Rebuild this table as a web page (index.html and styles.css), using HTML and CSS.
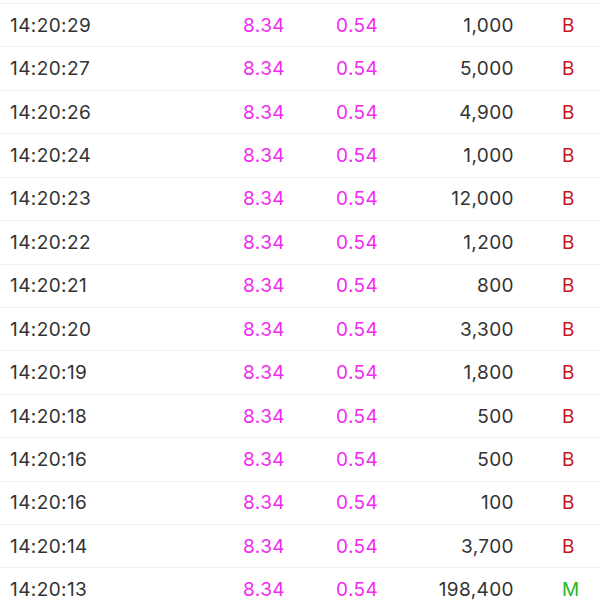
FILE: index.html
```html
<!DOCTYPE html>
<html>
<head>
<meta charset="utf-8">
<link rel="stylesheet" href="styles.css">
</head>
<body>
<div class="list">
  <div class="row"><span class="time">14:20:29</span><span class="price">8.34</span><span class="chg">0.54</span><span class="vol">1,000</span><span class="flag b">B</span></div>
  <div class="row"><span class="time">14:20:27</span><span class="price">8.34</span><span class="chg">0.54</span><span class="vol">5,000</span><span class="flag b">B</span></div>
  <div class="row"><span class="time">14:20:26</span><span class="price">8.34</span><span class="chg">0.54</span><span class="vol">4,900</span><span class="flag b">B</span></div>
  <div class="row"><span class="time">14:20:24</span><span class="price">8.34</span><span class="chg">0.54</span><span class="vol">1,000</span><span class="flag b">B</span></div>
  <div class="row"><span class="time">14:20:23</span><span class="price">8.34</span><span class="chg">0.54</span><span class="vol">12,000</span><span class="flag b">B</span></div>
  <div class="row"><span class="time">14:20:22</span><span class="price">8.34</span><span class="chg">0.54</span><span class="vol">1,200</span><span class="flag b">B</span></div>
  <div class="row"><span class="time">14:20:21</span><span class="price">8.34</span><span class="chg">0.54</span><span class="vol">800</span><span class="flag b">B</span></div>
  <div class="row"><span class="time">14:20:20</span><span class="price">8.34</span><span class="chg">0.54</span><span class="vol">3,300</span><span class="flag b">B</span></div>
  <div class="row"><span class="time">14:20:19</span><span class="price">8.34</span><span class="chg">0.54</span><span class="vol">1,800</span><span class="flag b">B</span></div>
  <div class="row"><span class="time">14:20:18</span><span class="price">8.34</span><span class="chg">0.54</span><span class="vol">500</span><span class="flag b">B</span></div>
  <div class="row"><span class="time">14:20:16</span><span class="price">8.34</span><span class="chg">0.54</span><span class="vol">500</span><span class="flag b">B</span></div>
  <div class="row"><span class="time">14:20:16</span><span class="price">8.34</span><span class="chg">0.54</span><span class="vol">100</span><span class="flag b">B</span></div>
  <div class="row"><span class="time">14:20:14</span><span class="price">8.34</span><span class="chg">0.54</span><span class="vol">3,700</span><span class="flag b">B</span></div>
  <div class="row"><span class="time">14:20:13</span><span class="price">8.34</span><span class="chg">0.54</span><span class="vol">198,400</span><span class="flag m">M</span></div>
</div>
</body>
</html>
```
FILE: styles.css
```css
html, body {
  margin: 0;
  padding: 0;
  background: #ffffff;
}
body {
  font-family: "Inter", "Liberation Sans", sans-serif;
  font-size: 19px;
  letter-spacing: 0.4px;
  color: #333333;
  overflow: hidden;
  height: 600px;
}
.list {
  padding-top: 3px;
}
.row {
  display: grid;
  grid-template-columns: 200px 85px 135px 94px 1fr;
  align-items: center;
  height: 43.43px;
  box-sizing: border-box;
  border-top: 1px solid #f0f0f0;
}
.time {
  padding-left: 10px;
}
.price {
  text-align: right;
  color: #f22bf0;
}
.chg {
  padding-left: 51px;
  color: #f22bf0;
}
.vol {
  text-align: right;
}
.flag {
  padding-left: 48px;
}
.b {
  color: #c8161d;
}
.m {
  color: #29b829;
}
```
